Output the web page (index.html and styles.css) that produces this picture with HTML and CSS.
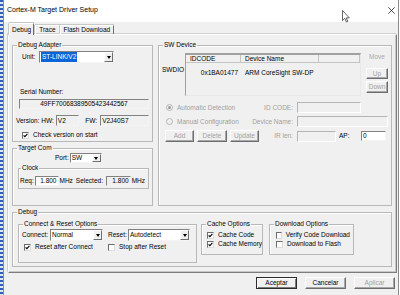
FILE: index.html
```html
<!DOCTYPE html>
<html lang="en">

<head>
    <meta charset="UTF-8">
    <meta name="viewport" content="width=device-width, initial-scale=1.0">
    <title>Cortex-M Target Driver Setup</title>
    <link rel="stylesheet" href="styles.css">
</head>

<body>
    <div class="window">
        <div class="titlebar">
            <span class="title">Cortex-M Target Driver Setup</span>
            <svg class="close" width="7" height="7" viewBox="0 0 7 7">
                <path d="M0.3 0.3 L6.7 6.7 M6.7 0.3 L0.3 6.7" stroke="#222" stroke-width="0.8" />
            </svg>
        </div>

        <!-- mouse pointer sitting on the title bar -->
        <svg class="cursor" width="8" height="13" viewBox="0 0 8 13">
            <path d="M0.5 0.5 L0.5 10.5 L2.8 8.4 L4.4 12 L5.8 11.4 L4.3 7.9 L7.3 7.9 Z" fill="#fff" stroke="#222"
                stroke-width="0.7" />
        </svg>

        <div class="client">
            <div class="tabs">
                <div class="tab active">Debug</div>
                <div class="tab">Trace</div>
                <div class="tab">Flash Download</div>
            </div>

            <div class="panel">
                <fieldset class="group adapter">
                    <legend>Debug Adapter</legend>
                    <div class="row unit-row">
                        <span class="unit-lbl">Unit:</span>
                        <div class="combo unit"><span class="val"><span class="hl">ST-LINK/V2</span></span><span
                                class="arrow"></span></div>
                    </div>
                    <div class="serial-lbl">Serial Number:</div>
                    <div class="edit ro serial">49FF70068389505423442567</div>
                    <div class="row version-row">
                        <span>Version: HW:</span>
                        <div class="edit ro hw">V2</div>
                        <span class="fw-lbl">FW:</span>
                        <div class="edit ro fw">V2J40S7</div>
                    </div>
                    <div class="check version-check"><span class="box"><svg class="tick" viewBox="0 0 5 5">
                                <path d="M0.6 2.3 L1.9 3.7 L4.4 0.9" /></svg></span>Check version on start</div>
                </fieldset>

                <fieldset class="group swdev">
                    <legend>SW Device</legend>
                    <div class="sw-top">
                        <span class="swdio">SWDIO</span>
                        <div class="list">
                            <div class="list-head">
                                <span class="c1">IDCODE</span>
                                <span class="c2">Device Name</span>
                                <span class="c3"></span>
                            </div>
                            <div class="list-row">
                                <span class="c1 num">0x1BA01477</span>
                                <span class="c2">ARM CoreSight SW-DP</span>
                            </div>
                        </div>
                        <div class="move">
                            <span class="move-lbl">Move</span>
                            <div class="btn dis up">Up</div>
                            <div class="btn dis down">Down</div>
                        </div>
                    </div>

                    <div class="sw-row first">
                        <div class="opt"><span class="radio on"></span>Automatic Detection</div>
                        <span class="flabel">ID CODE:</span>
                        <div class="edit dis idcode"></div>
                    </div>
                    <div class="sw-row">
                        <div class="opt"><span class="radio"></span>Manual Configuration</div>
                        <span class="flabel">Device Name:</span>
                        <div class="edit dis devname"></div>
                    </div>
                    <div class="sw-row last">
                        <div class="sw-btns">
                            <div class="btn dis add">Add</div>
                            <div class="btn dis del">Delete</div>
                            <div class="btn dis upd">Update</div>
                        </div>
                        <span class="flabel ir">IR len:</span>
                        <div class="edit dis irlen"></div>
                        <span class="ap-lbl">AP:</span>
                        <div class="edit ap">0</div>
                    </div>
                </fieldset>

                <fieldset class="group target">
                    <legend>Target Com</legend>
                    <div class="row port-row">
                        <span>Port:</span>
                        <div class="combo port"><span class="val">SW</span><span class="arrow"></span></div>
                    </div>
                    <fieldset class="group clock">
                        <legend>Clock</legend>
                        <div class="row clock-row">
                            <span>Req:</span>
                            <div class="edit req">1.800</div>
                            <span class="mhz">MHz</span>
                            <span class="sel-lbl">Selected:</span>
                            <div class="edit ro selected">1.800</div>
                            <span class="mhz">MHz</span>
                        </div>
                    </fieldset>
                </fieldset>

                <fieldset class="group debug">
                    <legend>Debug</legend>
                    <div class="debug-row">
                        <fieldset class="group conn">
                            <legend>Connect &amp; Reset Options</legend>
                            <div class="row conn-row">
                                <span class="conn-lbl">Connect:</span>
                                <div class="combo connect"><span class="val">Normal</span><span class="arrow"></span>
                                </div>
                                <span class="reset-lbl">Reset:</span>
                                <div class="combo reset"><span class="val">Autodetect</span><span
                                        class="arrow"></span></div>
                            </div>
                            <div class="row conn-checks">
                                <div class="check after-connect"><span class="box"><svg class="tick"
                                            viewBox="0 0 5 5">
                                            <path d="M0.6 2.3 L1.9 3.7 L4.4 0.9" /></svg></span>Reset after Connect
                                </div>
                                <div class="check"><span class="box"></span>Stop after Reset</div>
                            </div>
                        </fieldset>

                        <fieldset class="group cache">
                            <legend>Cache Options</legend>
                            <div class="check opt-first"><span class="box"><svg class="tick" viewBox="0 0 5 5">
                                        <path d="M0.6 2.3 L1.9 3.7 L4.4 0.9" /></svg></span>Cache Code</div>
                            <div class="check"><span class="box"><svg class="tick" viewBox="0 0 5 5">
                                        <path d="M0.6 2.3 L1.9 3.7 L4.4 0.9" /></svg></span>Cache Memory</div>
                        </fieldset>

                        <fieldset class="group download">
                            <legend>Download Options</legend>
                            <div class="check opt-first"><span class="box"></span>Verify Code Download</div>
                            <div class="check"><span class="box"></span>Download to Flash</div>
                        </fieldset>
                    </div>
                </fieldset>
            </div>

            <div class="dlg-buttons">
                <div class="btn default">Aceptar</div>
                <div class="btn">Cancelar</div>
                <div class="btn dis">Aplicar</div>
            </div>
        </div>
    </div>
</body>

</html>
```

FILE: styles.css
```css
* {
    box-sizing: border-box;
}

body {
    margin: 0;
    width: 400px;
    height: 295px;
    overflow: hidden;
    font-family: "Liberation Sans", Arial, sans-serif;
    font-size: 6.5px;
    line-height: 8px;
    color: #000;
    background: repeating-linear-gradient(to bottom, #2f62b4 0, #2f62b4 2px, #dfe6f0 2px, #dfe6f0 4px) 0 0 / 3px 100% no-repeat, #fff;
}

.window {
    position: relative;
    margin-left: 3px;
    width: 396px;
    height: 295px;
    background: #f0f0f0;
    border-left: 1px solid #8c8c8c;
    border-right: 1px solid #8c8c8c;
}

.titlebar {
    height: 22px;
    background: #fff;
    display: flex;
    align-items: center;
    justify-content: space-between;
    padding: 0 3px 2px 3px;
}

.title {
    font-size: 7px;
}

.cursor {
    position: absolute;
    left: 338px;
    top: 10px;
}

.client {
    padding: 0 1px 0 4px;
}

/* tabs */

.tabs {
    position: relative;
    z-index: 1;
    display: flex;
    align-items: flex-end;
    height: 13px;
    margin-bottom: -1px;
    padding-left: 1px;
}

.tab {
    height: 9px;
    margin-bottom: 1px;
    padding: 0 3px;
    border-top: 1px solid #fff;
    border-left: 1px solid #fff;
    border-right: 1px solid #6d6d6d;
    box-shadow: -1px 0 0 #c8c8c8, 0 -1px 0 #c8c8c8;
    line-height: 8px;
}

.tab.active {
    height: 12px;
    margin-bottom: 0;
    margin-right: 1px;
    padding: 1px 2px 0;
    background: #f0f0f0;
    line-height: 9px;
}

.panel {
    display: grid;
    grid-template-columns: 141px 234px;
    grid-template-rows: 101px 62px 59px;
    column-gap: 5px;
    row-gap: 2px;
    height: 239px;
    padding: 6px 4px 5px 3px;
    border: 1px solid;
    border-color: #fff #7c7c7c #7c7c7c #fff;
    box-shadow: -1px -1px 0 #d0d0d0, inset -1px -1px 0 #c8c8c8;
}

/* group boxes */

.group {
    min-width: 0;
    height: 100%;
    margin: 0;
    padding: 0 3px 0 3px;
    border: 1px solid #b8b8b8;
    box-shadow: inset 1px 1px 0 #fff;
}

.group legend {
    margin-left: 1px;
    padding: 0 1px;
    line-height: 8px;
}

.adapter {
    grid-column: 1;
    grid-row: 1;
}

.swdev {
    grid-column: 2;
    grid-row: 1 / 3;
}

.target {
    grid-column: 1;
    grid-row: 2;
}

.debug {
    grid-column: 1 / 3;
    grid-row: 3;
}

.row {
    display: flex;
    align-items: center;
    white-space: nowrap;
}

/* controls */

.edit {
    height: 10px;
    padding: 0 1px;
    border: 1px solid;
    border-color: #828282 #f4f4f4 #f4f4f4 #828282;
    background: #fff;
    line-height: 8px;
    white-space: nowrap;
    overflow: hidden;
}

.edit.ro,
.edit.dis {
    background: #f0f0f0;
}

.edit.dis {
    border-color: #b4b4b4 #fff #fff #b4b4b4;
}

.combo {
    display: flex;
    height: 12px;
    border: 1px solid;
    border-color: #828282 #f4f4f4 #f4f4f4 #828282;
    background: #fff;
}

.combo .val {
    flex: 1;
    padding-left: 1px;
    line-height: 10px;
    overflow: hidden;
}

.combo .hl {
    display: inline-block;
    padding: 0 1px;
    background: #0a66d6;
    color: #fff;
}

.combo .arrow {
    display: flex;
    align-items: center;
    justify-content: center;
    width: 9px;
    border: 1px solid;
    border-color: #fff #6d6d6d #6d6d6d #fff;
    background: #f0f0f0;
}

.combo .arrow::after {
    content: "";
    border-left: 2.5px solid transparent;
    border-right: 2.5px solid transparent;
    border-top: 3px solid #000;
}

.btn {
    display: flex;
    align-items: center;
    justify-content: center;
    height: 12px;
    border: 1px solid;
    border-color: #fff #6d6d6d #6d6d6d #fff;
    background: #f0f0f0;
    box-shadow: inset -1px -1px 0 #a8a8a8;
    white-space: nowrap;
}

.btn.dis {
    color: #a0a0a0;
}

.btn.default {
    border-color: #2b2b2b;
    box-shadow: inset 1px 1px 0 #fff, inset -1px -1px 0 #7a7a7a;
}

.check {
    display: flex;
    align-items: center;
    height: 8px;
    white-space: nowrap;
}

.box {
    display: flex;
    width: 7px;
    height: 7px;
    margin-right: 4px;
    border: 1px solid;
    border-color: #6d6d6d #dcdcdc #dcdcdc #6d6d6d;
    background: #fff;
}

.tick {
    width: 5px;
    height: 5px;
    fill: none;
    stroke: #000;
    stroke-width: 1.1;
}

.radio {
    display: flex;
    align-items: center;
    justify-content: center;
    width: 7px;
    height: 7px;
    margin-right: 4px;
    border: 1px solid #b6b6b6;
    border-radius: 50%;
    background: #f0f0f0;
}

.radio.on::after {
    content: "";
    width: 3px;
    height: 3px;
    border-radius: 50%;
    background: #9a9a9a;
}

/* debug adapter */

.unit-row {
    margin-top: 2px;
}

.unit-lbl {
    width: 17px;
    margin-left: 6px;
}

.unit {
    width: 75px;
}

.serial-lbl {
    margin: 25px 0 0 4px;
}

.serial {
    width: 130px;
    margin: 3px 0 0 3px;
    text-align: center;
}

.version-row {
    margin-top: 6px;
}

.version-row .edit {
    height: 11px;
    line-height: 9px;
}

.hw {
    width: 24px;
    margin-left: 2px;
}

.fw-lbl {
    margin-left: 6px;
}

.fw {
    width: 50px;
    margin-left: 3px;
}

.version-check {
    margin: 5px 0 0 6px;
}

/* target com */

.port-row {
    margin: 1px 0 0 39px;
}

.port {
    width: 32px;
    height: 10px;
    margin-left: 1px;
}

.port .val {
    line-height: 8px;
}

.clock {
    height: 25px;
    margin: 1px 0 0 2px;
    width: 131px;
    padding-left: 1px;
}

.clock-row {
    margin-top: 4px;
}

.req,
.selected {
    text-align: right;
}

.req {
    width: 26px;
    margin-left: 1px;
}

.selected {
    width: 27px;
    margin-left: 3px;
}

.mhz {
    margin-left: 1px;
}

.sel-lbl {
    margin-left: 3px;
}

/* sw device */

.sw-top {
    display: flex;
    align-items: flex-start;
    margin-top: 4px;
}

.swdio {
    width: 23px;
    margin-top: 13px;
}

.list {
    width: 176px;
    height: 43px;
    border: 1px solid;
    border-top-width: 2px;
    border-color: #a0a0a0 #e8e8e8 #e8e8e8 #a0a0a0;
    background: #f0f0f0;
}

.list-head,
.list-row {
    display: flex;
    white-space: nowrap;
}

.list-head {
    height: 8px;
    line-height: 7px;
}

.list-head span {
    border-right: 1px solid #c4c4c4;
    border-bottom: 1px solid #c4c4c4;
    padding-left: 4px;
}

.list-head .c1 {
    padding-left: 4px;
}

.c1 {
    width: 55px;
}

.c2 {
    width: 78px;
}

.c3 {
    flex: 1;
}

.list-row {
    margin-top: 6px;
}

.list-row .num {
    padding-right: 3px;
    text-align: right;
}

.list-row .c2 {
    padding-left: 4px;
}

.move {
    display: flex;
    flex-direction: column;
    align-items: stretch;
    width: 22px;
    margin-left: 5px;
}

.move-lbl {
    color: #a8a8a8;
    text-align: center;
}

.move .up {
    height: 11px;
    margin-top: 7px;
}

.move .down {
    margin-top: 2px;
}

.sw-row {
    display: flex;
    align-items: center;
    height: 11px;
    margin-top: 3px;
    white-space: nowrap;
}

.sw-row.first {
    margin-top: 6px;
}

.sw-row.last {
    height: 12px;
}

.opt {
    display: flex;
    align-items: center;
    width: 90px;
    padding-left: 4px;
    color: #a0a0a0;
}

.flabel {
    width: 41px;
    margin-right: 4px;
    color: #a0a0a0;
    text-align: right;
}

.flabel.ir {
    width: 25px;
}

.sw-row .edit {
    height: 11px;
}

.idcode {
    width: 64px;
}

.devname {
    width: 91px;
}

.irlen {
    width: 39px;
}

.sw-btns {
    display: flex;
    width: 106px;
    padding-left: 3px;
    gap: 3px;
}

.add {
    width: 29px;
}

.del {
    width: 30px;
}

.upd {
    width: 29px;
}

.ap-lbl {
    margin-left: 3px;
}

.edit.ap {
    width: 25px;
    height: 10px;
    margin: 0 2px 0 auto;
}

/* debug */

.debug-row {
    display: flex;
    align-items: flex-start;
    margin: 4px 0 0 2px;
}

.conn {
    width: 179px;
    height: 43px;
}

.conn-row {
    margin-top: 1px;
}

.conn-lbl {
    width: 28px;
}

.connect {
    width: 53px;
}

.reset-lbl {
    width: 20px;
    margin-left: 5px;
}

.reset {
    width: 62px;
}

.conn-checks {
    margin: 2px 0 0 2px;
}

.after-connect {
    width: 84px;
}

.cache {
    width: 62px;
    height: 35px;
    margin-left: 4px;
}

.download {
    width: 85px;
    height: 35px;
    margin-left: 6px;
}

.cache .check {
    margin-left: 2px;
}

.download .check {
    margin-left: 3px;
}

.check.opt-first {
    margin-top: 3px;
    margin-bottom: 1px;
}

/* dialog buttons */

.dlg-buttons {
    display: flex;
    justify-content: flex-end;
    gap: 8px;
    margin-top: 4px;
    padding-right: 2px;
}

.dlg-buttons .btn {
    width: 41px;
}
```
